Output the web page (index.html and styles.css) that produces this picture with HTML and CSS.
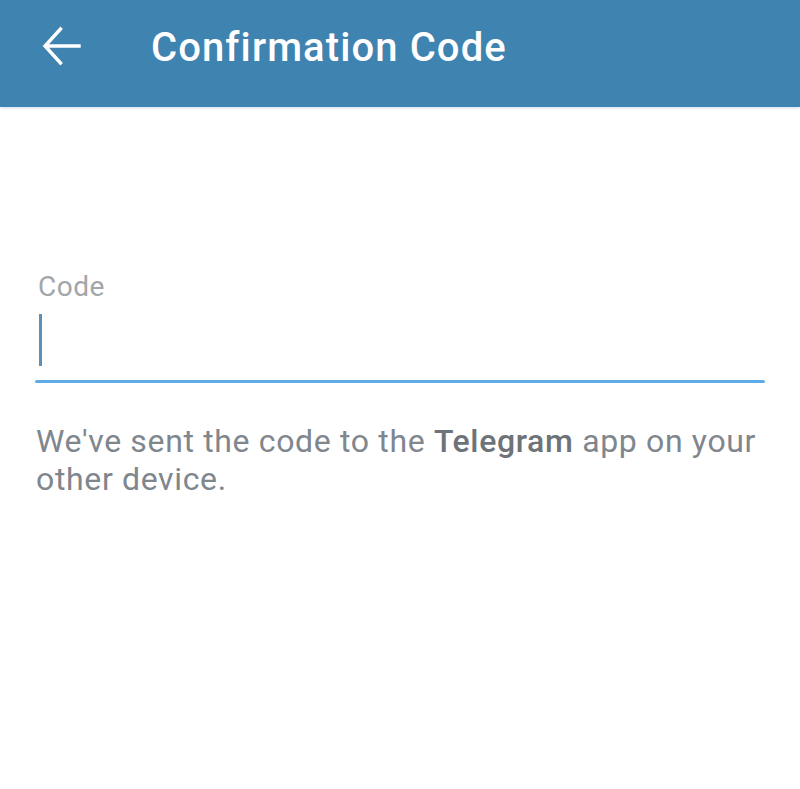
FILE: index.html
```html
<!DOCTYPE html>
<html>
<head>
<meta charset="utf-8">
<link rel="stylesheet" href="styles.css">
</head>
<body>
<header class="appbar">
  <button class="back" aria-label="Back">
    <svg width="40" height="40" viewBox="0 0 40 40"><path d="M38 20H5M19.5 3L4 20l15.5 17" fill="none" stroke="#fff" stroke-width="3.4" stroke-linecap="square"/></svg>
  </button>
  <h1 class="title">Confirmation Code</h1>
</header>
<main class="content">
  <label class="label">Code</label>
  <div class="field"><span class="cursor"></span></div>
  <div class="underline"></div>
  <p class="hint">We've sent the code to the <b>Telegram</b> app on your other device.</p>
</main>
</body>
</html>
```
FILE: styles.css
```css
html, body { margin: 0; padding: 0; background: #fff; }
body { font-family: Roboto, "Noto Sans", sans-serif; width: 800px; height: 789px; overflow: hidden; }
.appbar {
  height: 107px;
  background: #3f84b1;
  display: flex;
  align-items: flex-start;
  box-shadow: 0 1px 3px rgba(60,130,180,0.25);
  box-sizing: border-box;
  padding-top: 26px;
}
.back {
  background: none; border: 0; padding: 0;
  margin-left: 41px; width: 40px; height: 40px;
  display: flex;
}
.title {
  margin: 2px 0 0 70px;
  color: #fff;
  font-weight: 500;
  font-size: 40px;
  line-height: 40px;
  letter-spacing: 1.1px;
}
.content { padding: 164px 35px 0 35px; }
.label {
  display: block;
  padding-left: 3px;
  color: #a2a6aa;
  font-size: 28px;
  line-height: 32px;
  letter-spacing: 0.5px;
}
.field {
  margin-top: 11px;
  height: 66px;
  display: flex;
  align-items: flex-start;
}
.cursor { width: 3px; height: 52px; background: #5b8fb8; margin-left: 4px; }
.underline { height: 3px; background: #5eabe8; border-radius: 2px; }
.hint {
  margin: 39px 0 0 1px;
  color: #80868d;
  font-size: 32px;
  line-height: 38px;
  letter-spacing: 0.65px;
}
.hint b { color: #6d7379; font-weight: 500; }
```
